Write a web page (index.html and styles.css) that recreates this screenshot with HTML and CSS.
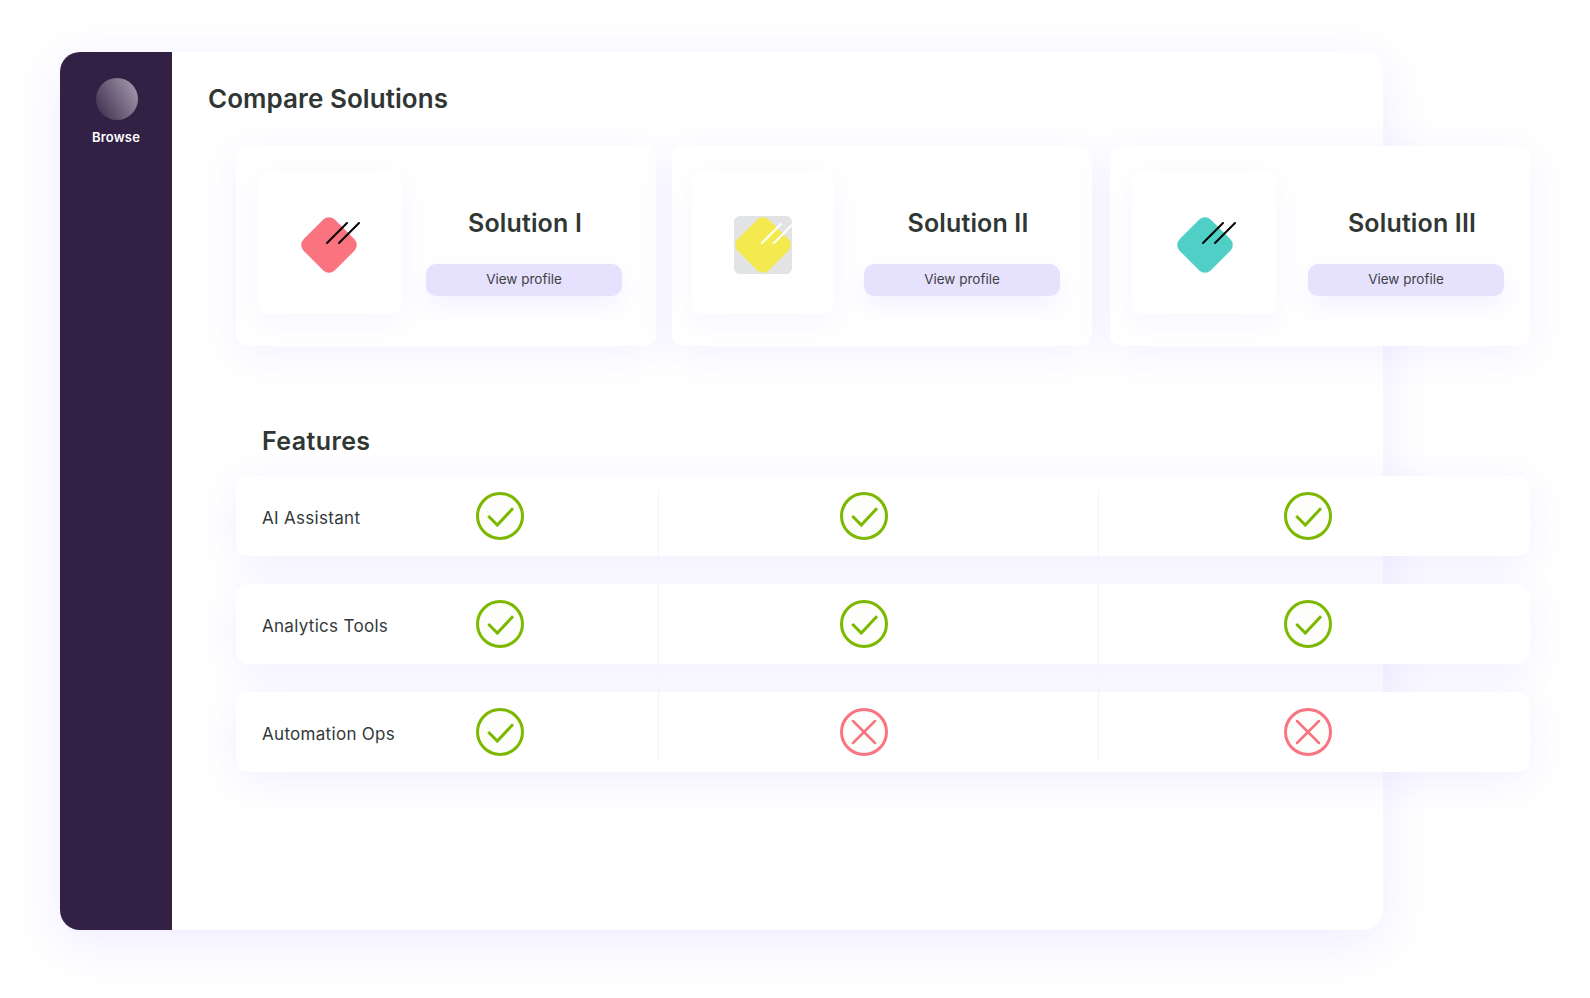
FILE: index.html
```html
<!DOCTYPE html>
<html>
<head>
	<title>Compare Solutions</title>
	<link rel="stylesheet" href="styles.css">
</head>
<body>
	<svg class="defs" width="0" height="0">
		<symbol id="yes" viewBox="0 0 48 48">
			<circle class="ring" cx="24" cy="24" r="22.5"></circle>
			<path class="tick" d="M12.3 24 L21.3 33 L37 16.3"></path>
		</symbol>
		<symbol id="no" viewBox="0 0 48 48">
			<circle class="ring" cx="24" cy="24" r="22.5"></circle>
			<path class="cross" d="M13 13 L35 35 M35 13 L13 35"></path>
		</symbol>
	</svg>
	<div class="window">
		<div class="sidebar">
			<div class="avatar"></div>
			<div class="browse">Browse</div>
		</div>
		<div class="main">
			<h1>Compare Solutions</h1>
			<div class="cards">
				<div class="card card-one">
					<div class="thumb">
						<svg class="logo" viewBox="0 0 64 64">
							<rect class="coral" x="9" y="12" width="44" height="44" rx="8" transform="rotate(45 31 34)"></rect>
							<path class="dark" d="M29 32 L49 12 M41 32 L61 12"></path>
						</svg>
					</div>
					<div class="info">
						<div class="name">Solution I</div>
						<button type="button">View profile</button>
					</div>
				</div>
				<div class="card card-two">
					<div class="thumb">
						<svg class="logo" viewBox="0 0 64 64">
							<rect class="grey" x="3" y="5" width="58" height="58" rx="6"></rect>
							<rect class="yellow" x="10" y="12" width="44" height="44" rx="8" transform="rotate(45 32 34)"></rect>
							<path class="light" d="M31 32 L50 13 M43 32 L61 14"></path>
						</svg>
					</div>
					<div class="info">
						<div class="name">Solution II</div>
						<button type="button">View profile</button>
					</div>
				</div>
				<div class="card card-three">
					<div class="thumb">
						<svg class="logo" viewBox="0 0 64 64">
							<rect class="teal" x="11" y="12" width="44" height="44" rx="8" transform="rotate(45 33 34)"></rect>
							<path class="dark" d="M31 32 L51 12 M43 32 L63 12"></path>
						</svg>
					</div>
					<div class="info">
						<div class="name">Solution III</div>
						<button type="button">View profile</button>
					</div>
				</div>
			</div>
			<h2>Features</h2>
			<div class="rows">
				<div class="divider divider-one"></div>
				<div class="divider divider-two"></div>
				<div class="row">
					<div class="label">AI Assistant</div>
					<svg class="mark yes"><use href="#yes"></use></svg>
					<svg class="mark yes"><use href="#yes"></use></svg>
					<svg class="mark yes"><use href="#yes"></use></svg>
				</div>
				<div class="row">
					<div class="label">Analytics Tools</div>
					<svg class="mark yes"><use href="#yes"></use></svg>
					<svg class="mark yes"><use href="#yes"></use></svg>
					<svg class="mark yes"><use href="#yes"></use></svg>
				</div>
				<div class="row">
					<div class="label">Automation Ops</div>
					<svg class="mark yes"><use href="#yes"></use></svg>
					<svg class="mark no"><use href="#no"></use></svg>
					<svg class="mark no"><use href="#no"></use></svg>
				</div>
			</div>
		</div>
	</div>
</body>
</html>
```

FILE: styles.css
```css
html, body {
	margin: 0;
	background-color: #fff;
}
body {
	height: 998px;
	box-sizing: border-box;
	padding: 52px 0 0 60px;
	overflow: hidden;
	font-family: Inter, "Open Sans", sans-serif;
	color: #2f3633;
}
.defs {
	position: absolute;
}
.window {
	display: flex;
	width: 1323px;
	height: 878px;
	border-radius: 20px;
	background-color: #fff;
	box-shadow: 0 12px 50px rgba(104, 80, 255, 0.11);
}
.sidebar {
	width: 112px;
	flex: none;
	padding-top: 26px;
	box-sizing: border-box;
	display: flex;
	flex-direction: column;
	align-items: center;
	border-radius: 20px 0 0 20px;
	background-color: #322145;
}
.avatar {
	width: 42px;
	height: 42px;
	margin-left: 2px;
	border-radius: 50%;
	background: linear-gradient(60deg, #4a3a58 15%, #9a8fa4 85%);
}
.browse {
	margin-top: 8px;
	font-size: 13px;
	line-height: 18px;
	font-weight: 600;
	letter-spacing: 0.2px;
	color: #fff;
}
.main {
	flex: 1;
	min-width: 0;
	padding: 29px 0 0 36px;
}
h1 {
	margin: 0;
	font-size: 26px;
	line-height: 36px;
	font-weight: 600;
	letter-spacing: 0.06px;
}
.cards {
	display: grid;
	grid-template-columns: 420px 420px 422px;
	column-gap: 16px;
	width: 1294px;
	margin: 29px 0 0 28px;
}
.card {
	display: flex;
	height: 200px;
	box-sizing: border-box;
	padding-top: 26px;
	border-radius: 12px;
	background-color: #fff;
	box-shadow: 0 8px 40px rgba(104, 80, 255, 0.08);
}
.card-one {
	padding-left: 22px;
}
.card-two {
	padding-left: 20px;
}
.card-three {
	margin-left: 2px;
	padding-left: 22px;
}
.thumb {
	display: flex;
	align-items: center;
	justify-content: center;
	width: 144px;
	height: 142px;
	flex: none;
	border-radius: 10px;
	background-color: #fff;
	box-shadow: 0 8px 30px rgba(104, 80, 255, 0.06);
}
.card-two .thumb {
	width: 142px;
}
.logo {
	width: 64px;
	height: 64px;
	overflow: visible;
}
.coral {
	fill: #fa7480;
}
.yellow {
	fill: #f4ea50;
}
.teal {
	fill: #4fcfc5;
}
.grey {
	fill: #e2e3e5;
}
.dark, .light {
	fill: none;
	stroke-width: 2;
	stroke-linecap: round;
}
.dark {
	stroke: #000;
}
.light {
	stroke: #fff;
}
.info {
	width: 196px;
	margin-left: 24px;
	padding-top: 33px;
}
.card-two .info {
	margin-left: 30px;
}
.card-three .info {
	margin-left: 32px;
}
.name {
	height: 36px;
	line-height: 36px;
	font-size: 25px;
	font-weight: 600;
	text-align: center;
	white-space: nowrap;
	letter-spacing: 0.15px;
}
.card-one .name {
	position: relative;
	left: 1px;
}
.card-two .name, .card-three .name {
	position: relative;
	left: 6px;
}
button {
	display: block;
	width: 196px;
	height: 32px;
	margin-top: 23px;
	padding: 0 0 3px;
	border: none;
	border-radius: 10px;
	font-family: inherit;
	font-size: 13.5px;
	color: #3f4245;
	background-color: #e6e1fd;
	box-shadow: 0 10px 24px rgba(104, 80, 255, 0.08);
}
h2 {
	margin: 79px 0 0 54px;
	font-size: 25px;
	line-height: 32px;
	font-weight: 600;
	letter-spacing: 0.4px;
}
.rows {
	position: relative;
	display: flex;
	flex-direction: column;
	gap: 28px;
	width: 1294px;
	margin: 19px 0 0 28px;
}
.row {
	display: flex;
	align-items: center;
	height: 80px;
	border-radius: 12px;
	background-color: #fff;
	box-shadow: 0 8px 40px rgba(104, 80, 255, 0.09);
}
.label {
	width: 240px;
	flex: none;
	box-sizing: border-box;
	padding-left: 26px;
	padding-top: 3px;
	font-size: 17px;
	letter-spacing: 0.3px;
	color: #33393a;
}
.mark {
	width: 48px;
	height: 48px;
	flex: none;
}
.mark + .mark {
	margin-left: 316px;
}
.mark + .mark + .mark {
	margin-left: 396px;
}
.ring {
	fill: #fdfefb;
	stroke-width: 3;
}
.tick {
	fill: none;
	stroke-width: 3;
}
.cross {
	fill: none;
	stroke-width: 2.5;
	stroke-linecap: round;
}
.yes {
	stroke: #7cb800;
}
.no {
	stroke: #fa7480;
}
.divider {
	position: absolute;
	top: 14px;
	width: 1px;
	height: 270px;
	background-color: #f4f2fb;
	z-index: 1;
}
.divider-one {
	left: 422px;
}
.divider-two {
	left: 862px;
}
```
